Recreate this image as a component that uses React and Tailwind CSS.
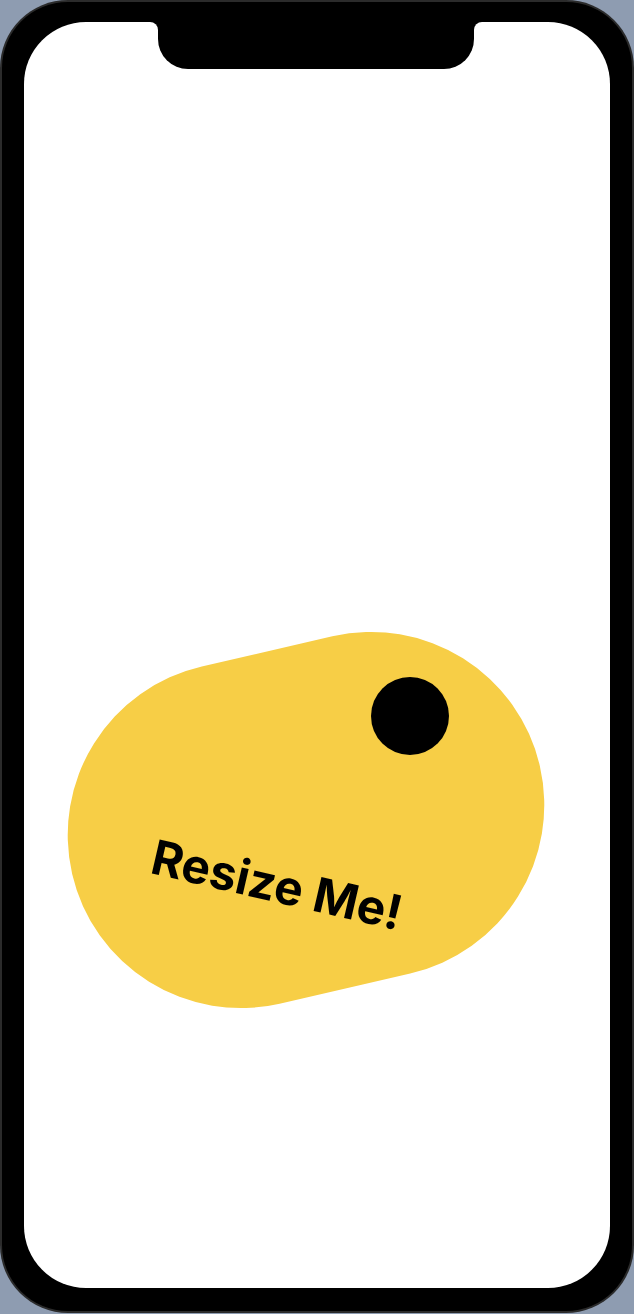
export default function App() {
  return (
    <div className="h-[1314px] w-[634px] overflow-hidden bg-[#8e9cb1]">
      {/* phone body */}
      <div className="h-[1313px] rounded-[68px] bg-[#2b2b2b] p-[2px]">
        <div className="h-full rounded-[66px] bg-black px-[22px] pb-[23px] pt-[20px]">
          {/* screen */}
          <div className="relative h-full overflow-hidden rounded-[62px] bg-white">
            {/* notch */}
            <div className="absolute left-[126px] top-0 h-[8px] w-[8px] bg-black">
              <div className="h-full w-full rounded-tr-[8px] bg-white" />
            </div>
            <div className="absolute left-[134px] top-0 h-[47px] w-[316px] rounded-b-[30px] bg-black" />
            <div className="absolute left-[450px] top-0 h-[8px] w-[8px] bg-black">
              <div className="h-full w-full rounded-tl-[8px] bg-white" />
            </div>

            {/* resizable shape */}
            <div className="absolute left-[42px] top-[625px] h-[346px] w-[480px] rotate-[-13deg] rounded-full bg-[#f7ce46]" />
            <div className="absolute left-[347px] top-[655px] h-[78px] w-[78px] rounded-full bg-black" />
            <div className="absolute left-[93px] top-[836px] flex h-[54px] w-[320px] rotate-[13deg] items-center justify-center">
              <span className="font-['Inter',sans-serif] text-[48px] font-bold leading-none text-black">
                Resize Me!
              </span>
            </div>
          </div>
        </div>
      </div>
    </div>
  );
}
